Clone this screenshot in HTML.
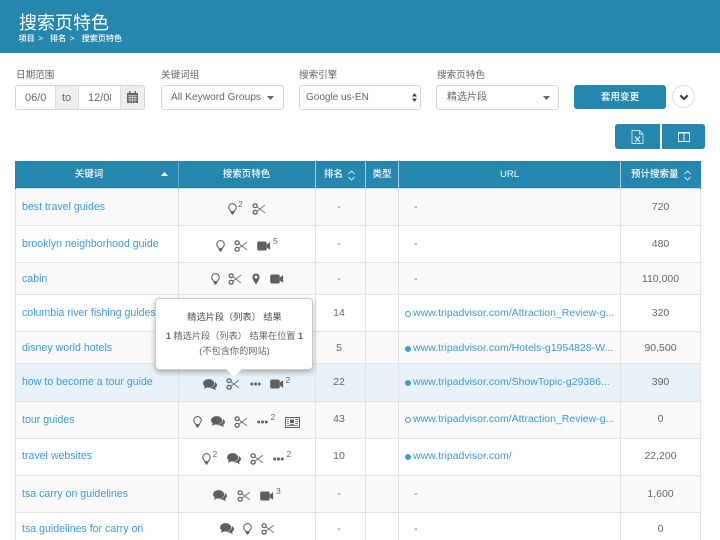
<!DOCTYPE html>
<html><head><meta charset="utf-8">
<style>
html,body{margin:0;padding:0;background:#fff}
#p{position:relative;width:720px;height:540px;overflow:hidden;font-family:"Liberation Sans","Noto Sans CJK SC",sans-serif;color:#666;background:#fff;filter:blur(.3px)}
#p div,#p a,#p svg{position:absolute;box-sizing:border-box}
.t{white-space:nowrap;line-height:14px;height:14px}
.c{transform:translateX(-50%)}
.l{font-size:9.6px;color:#666}
.b{background:#fff;border:1px solid #d5d5d5;border-radius:3px}
.v{font-size:10.5px;color:#666}
.h{font-size:9.5px;color:#fff;font-weight:500}
.k{font-size:10.6px;color:#3c9bd6;left:22px}
.u{font-size:10.5px;color:#3c9bd6;left:413px}
.n{font-size:10.5px;color:#666}
.s{font-size:8.5px;color:#666}
.i{fill:#5f5f5f;stroke:none;overflow:visible}
.r{left:15px;width:686px}
.vl{top:161px;width:1px;height:379px;background:#e2e2e2}
.hl{left:15px;width:686px;height:1px;background:#e3e3e3}
.dot{left:405px;width:6px;height:6px;border-radius:50%;border:1px solid #3c9bd6}
.f{background:#3c9bd6}
</style></head><body>
<svg width="0" height="0" style="position:absolute">
<defs>
<symbol id="bulb" viewBox="0 0 12 16"><path d="M6 .8a5 5 0 0 0-3.200 8.800c.6.6.9 1.200 1 2h4.400c.1-.8.4-1.400 1-2A5 5 0 0 0 6 .8z" fill="none" stroke="#5f5f5f" stroke-width="1.400"/><rect x="3.800" y="11.800" width="4.400" height="2.200" rx=".6" fill="#5f5f5f"/><rect x="4.700" y="14" width="2.600" height="1.500" rx=".7" fill="#5f5f5f"/></symbol>
<symbol id="sc" viewBox="0 0 15 14"><ellipse cx="3" cy="3.200" rx="2.400" ry="2.200" fill="none" stroke="#5f5f5f" stroke-width="1.500"/><ellipse cx="3" cy="10.800" rx="2.400" ry="2.200" fill="none" stroke="#5f5f5f" stroke-width="1.500"/><path d="M5 4.400 14.500 11.500M5 9.600 14.500 2.500" fill="none" stroke="#777" stroke-width="1.200"/></symbol>
<symbol id="vid" viewBox="0 0 15 11"><rect x="0" y=".5" width="10.500" height="10" rx="2" fill="#5f5f5f"/><path d="M10.500 4 14.200 1.200V9.800L10.500 7z" fill="#5f5f5f"/></symbol>
<symbol id="pin" viewBox="0 0 10 14"><path fill-rule="evenodd" d="M5 0a4.500 4.500 0 0 0-4.500 4.500C.5 7.500 5 14 5 14s4.500-6.500 4.500-9.500A4.500 4.500 0 0 0 5 0zm0 2.800a1.800 1.800 0 1 1 0 3.600 1.800 1.800 0 0 1 0-3.600z" fill="#5f5f5f"/></symbol>
<symbol id="chat" viewBox="0 0 15 13"><ellipse cx="6" cy="4.800" rx="6" ry="4.600" fill="#5f5f5f"/><path d="M2 7.500 1 10.500 5 9z" fill="#5f5f5f"/><path d="M12.800 3.300c1.500.9 2.200 2 2.200 3.300 0 1.300-.8 2.400-2 3.100l.9 2.600-3.300-1.900c-1.400 0-2.700-.3-3.600-1 3.300 0 6.300-2.500 5.800-6.100z" fill="#5f5f5f"/></symbol>
<symbol id="dots" viewBox="0 0 11 4"><circle cx="1.700" cy="2" r="1.500" fill="#5f5f5f"/><circle cx="5.500" cy="2" r="1.500" fill="#5f5f5f"/><circle cx="9.300" cy="2" r="1.500" fill="#5f5f5f"/></symbol>
<symbol id="news" viewBox="0 0 15 11"><rect x=".5" y=".5" width="14" height="10" fill="none" stroke="#5f5f5f"/><rect x="5" y="2.500" width="4" height="3.500" fill="#5f5f5f"/><path d="M2 2.500h2M2 4.500h2M2 6.500h2M2 8.500h11M10 2.500h3M10 4.500h3M10 6.500h3M5 7.300h4" stroke="#5f5f5f" stroke-width=".8"/></symbol>
</defs>
</svg>
<div id="p">
<!-- header -->
<div style="left:0;top:0;width:720px;height:53px;background:#2587ad"></div>
<div class="t" style="left:19px;top:13px;font-size:18px;line-height:20px;height:20px;color:#fff">搜索页特色</div>
<div class="t" style="left:18.500px;top:33px;font-size:8.100px;line-height:12px;height:12px;color:#fff;font-weight:500;word-spacing:1.300px">项目 &gt;&nbsp; 排名 &gt;&nbsp; 搜索页特色</div>

<!-- filters -->
<div class="t l" style="left:16px;top:69px">日期范围</div>
<div class="t l" style="left:161px;top:69px">关键词组</div>
<div class="t l" style="left:299px;top:69px">搜索引擎</div>
<div class="t l" style="left:437px;top:69px">搜索页特色</div>

<div class="b" style="left:15px;top:85px;width:130px;height:25px"></div>
<div style="left:55px;top:86px;width:24px;height:23px;background:#eee;border-left:1px solid #ddd;border-right:1px solid #ddd"></div>
<div style="left:120px;top:86px;width:24px;height:23px;background:#eee;border-left:1px solid #ddd;border-radius:0 2px 2px 0"></div>
<div class="t v" style="left:25px;top:91px;font-size:11px">06/0</div>
<div class="t v" style="left:62px;top:91px;font-size:11px">to</div>
<div class="t v" style="left:88px;top:91px;width:23px;overflow:hidden;font-size:11px">12/08</div>
<svg style="left:127px;top:91px" width="11" height="12" viewBox="0 0 11 12"><path d="M0 2h11v10H0z" fill="#666"/><path d="M1 4.500h9M1 6.700h9M1 8.900h9M3 4v7.500M5.500 4v7.500M8 4v7.500" stroke="#eee" stroke-width=".6"/><rect x="2" y="0" width="1.500" height="3" fill="#666"/><rect x="7.500" y="0" width="1.500" height="3" fill="#666"/></svg>

<div class="b" style="left:161px;top:85px;width:123px;height:25px"></div>
<div class="t v" style="left:171px;top:91px;font-size:10.200px">All Keyword Groups</div>
<svg style="left:267px;top:96px" width="7" height="4"><path d="M0 0h7L3.500 4z" fill="#666"/></svg>

<div class="b" style="left:299px;top:85px;width:122px;height:25px"></div>
<div class="t v" style="left:306px;top:91px;font-size:10px">Google us-EN</div>
<svg style="left:412px;top:93px" width="5" height="9"><path d="M0 3.500 2.500 0 5 3.500zM0 5.500 2.500 9 5 5.500z" fill="#444"/></svg>

<div class="b" style="left:436px;top:85px;width:123px;height:25px"></div>
<div class="t v" style="left:447px;top:91px;font-size:10px">精选片段</div>
<svg style="left:543px;top:96px" width="7" height="4"><path d="M0 0h7L3.500 4z" fill="#666"/></svg>

<div style="left:574px;top:85px;width:92px;height:24px;background:#2587ad;border-radius:3px"></div>
<div class="t c" style="left:620px;top:91px;font-size:9.600px;color:#fff;font-weight:500">套用变更</div>
<div style="left:672px;top:85px;width:23px;height:23px;border-radius:50%;border:1.500px solid #ddd;background:#fff"></div>
<svg style="left:679px;top:94px" width="10" height="7" viewBox="0 0 10 7"><path d="M1.300 1.300 5 5l3.700-3.700" fill="none" stroke="#444" stroke-width="2.200"/></svg>

<div style="left:615px;top:124px;width:45px;height:25px;background:#2587ad;border-radius:3px 0 0 3px"></div>
<div style="left:662px;top:124px;width:43px;height:25px;background:#2587ad;border-radius:0 3px 3px 0"></div>
<svg style="left:631px;top:130px" width="13" height="14" viewBox="0 0 13 14"><path d="M1 .5h7.500L12 4v9.500H1zM8.500.5V4H12" fill="none" stroke="#cfe4ee" stroke-width=".9"/><path d="M4 6.500 9 12M9 6.500 4 12" stroke="#e6f1f6" stroke-width="1.100"/></svg>
<svg style="left:677.500px;top:131.500px" width="12" height="10" viewBox="0 0 12 10"><path d="M.5.500h11v9H.5zM6 .5v9" fill="none" stroke="#e6f1f6" stroke-width="1"/><path d="M.5 1h11" stroke="#e6f1f6"/></svg>

<!-- table -->
<div style="left:15px;top:161px;width:686px;height:28px;background:#2587ad"></div>
<div class="r" style="top:189px;height:36px;background:#f9f9f9"></div>
<div class="r" style="top:226px;height:36px;background:#fff"></div>
<div class="r" style="top:263px;height:31px;background:#f9f9f9"></div>
<div class="r" style="top:295px;height:36px;background:#fff"></div>
<div class="r" style="top:332px;height:31px;background:#f9f9f9"></div>
<div class="r" style="top:364px;height:37px;background:#e9f1f8"></div>
<div class="r" style="top:402px;height:36px;background:#f9f9f9"></div>
<div class="r" style="top:439px;height:36px;background:#fff"></div>
<div class="r" style="top:476px;height:36px;background:#f9f9f9"></div>
<div class="r" style="top:513px;height:27px;background:#fff"></div>

<div class="hl" style="top:188px;background:#d9d9d9"></div>
<div class="hl" style="top:225px"></div><div class="hl" style="top:262px"></div><div class="hl" style="top:294px"></div><div class="hl" style="top:331px"></div><div class="hl" style="top:363px"></div><div class="hl" style="top:401px"></div><div class="hl" style="top:438px"></div><div class="hl" style="top:475px"></div><div class="hl" style="top:512px"></div>

<div class="vl" style="left:15px"></div><div class="vl" style="left:178px"></div><div class="vl" style="left:315px"></div><div class="vl" style="left:365px"></div><div class="vl" style="left:398px"></div><div class="vl" style="left:620px"></div><div class="vl" style="left:700px"></div>
<div style="left:178px;top:161px;width:1px;height:28px;background:#6aa9c5"></div>
<div style="left:315px;top:161px;width:1px;height:28px;background:#a8cfde"></div>
<div style="left:365px;top:161px;width:1px;height:28px;background:#a8cfde"></div>
<div style="left:398px;top:161px;width:1px;height:28px;background:#a8cfde"></div>
<div style="left:620px;top:161px;width:1px;height:28px;background:#a8cfde"></div>
<div style="left:15px;top:161px;width:1px;height:28px;background:#2587ad"></div>
<div style="left:700px;top:161px;width:1px;height:28px;background:#2587ad"></div>

<div class="t h c" style="left:89px;top:168px">关键词</div>
<svg style="left:161px;top:172px" width="7" height="4"><path d="M0 4h7L3.500 0z" fill="#fff"/></svg>
<div class="t h c" style="left:246.500px;top:168px">搜索页特色</div>
<div class="t h" style="left:324px;top:168px">排名</div>
<svg style="left:348px;top:170px" width="7" height="11" viewBox="0 0 7 11"><path d="M.5 4 3.500 1l3 3M.5 7l3 3 3-3" fill="none" stroke="#cfe4ee"/></svg>
<div class="t h c" style="left:382px;top:168px">类型</div>
<div class="t h c" style="left:509.500px;top:168px">URL</div>
<div class="t h" style="left:631px;top:168px">预计搜索量</div>
<svg style="left:684px;top:170px" width="7" height="11" viewBox="0 0 7 11"><path d="M.5 4 3.500 1l3 3M.5 7l3 3 3-3" fill="none" stroke="#cfe4ee"/></svg>

<!-- keyword column -->
<div class="t k" style="top:200px">best travel guides</div>
<div class="t k" style="top:237px">brooklyn neighborhood guide</div>
<div class="t k" style="top:272px">cabin</div>
<div class="t k" style="top:306px">columbia river fishing guides</div>
<div class="t k" style="top:341px">disney world hotels</div>
<div class="t k" style="top:375px">how to become a tour guide</div>
<div class="t k" style="top:413px">tour guides</div>
<div class="t k" style="top:449px">travel websites</div>
<div class="t k" style="top:487px">tsa carry on guidelines</div>
<div class="t k" style="top:522px">tsa guidelines for carry on</div>

<!-- icons -->
<svg class="i" style="left:227.500px;top:203px" width="9" height="12"><use href="#bulb"/></svg><div class="t s" style="left:238px;top:197px">2</div><svg class="i" style="left:252px;top:203px" width="14" height="12"><use href="#sc"/></svg>
<svg class="i" style="left:215.500px;top:240px" width="9" height="12"><use href="#bulb"/></svg><svg class="i" style="left:234px;top:240px" width="14" height="12"><use href="#sc"/></svg><svg class="i" style="left:257px;top:241px" width="14" height="10"><use href="#vid"/></svg><div class="t s" style="left:273px;top:234px">5</div>
<svg class="i" style="left:210.500px;top:273px" width="9" height="12"><use href="#bulb"/></svg><svg class="i" style="left:228px;top:273px" width="14" height="12"><use href="#sc"/></svg><svg class="i" style="left:252px;top:273px" width="8" height="12"><use href="#pin"/></svg><svg class="i" style="left:269.500px;top:274px" width="14" height="10"><use href="#vid"/></svg>
<svg class="i" style="left:203px;top:378.500px" width="14" height="12"><use href="#chat"/></svg><svg class="i" style="left:226px;top:378px" width="14" height="12"><use href="#sc"/></svg><svg class="i" style="left:249.500px;top:382px" width="11" height="4"><use href="#dots"/></svg><svg class="i" style="left:270px;top:379px" width="14" height="10"><use href="#vid"/></svg><div class="t s" style="left:285.500px;top:373px">2</div>
<svg class="i" style="left:193px;top:416px" width="9" height="12"><use href="#bulb"/></svg><svg class="i" style="left:211px;top:416px" width="14" height="12"><use href="#chat"/></svg><svg class="i" style="left:234px;top:416px" width="14" height="12"><use href="#sc"/></svg><svg class="i" style="left:257px;top:419.500px" width="11" height="4"><use href="#dots"/></svg><div class="t s" style="left:270.500px;top:410px">2</div><svg class="i" style="left:285px;top:416.500px" width="15" height="11"><use href="#news"/></svg>
<svg class="i" style="left:202px;top:453px" width="9" height="12"><use href="#bulb"/></svg><div class="t s" style="left:212.500px;top:447px">2</div><svg class="i" style="left:227px;top:453px" width="14" height="12"><use href="#chat"/></svg><svg class="i" style="left:250px;top:453px" width="14" height="12"><use href="#sc"/></svg><svg class="i" style="left:273px;top:456.500px" width="11" height="4"><use href="#dots"/></svg><div class="t s" style="left:286.500px;top:447px">2</div>
<svg class="i" style="left:213px;top:490px" width="14" height="12"><use href="#chat"/></svg><svg class="i" style="left:236.500px;top:490px" width="14" height="12"><use href="#sc"/></svg><svg class="i" style="left:260px;top:491px" width="14" height="10"><use href="#vid"/></svg><div class="t s" style="left:276px;top:484px">3</div>
<svg class="i" style="left:219.500px;top:523px" width="14" height="12"><use href="#chat"/></svg><svg class="i" style="left:242.500px;top:523px" width="9" height="12"><use href="#bulb"/></svg><svg class="i" style="left:260.500px;top:523px" width="14" height="12"><use href="#sc"/></svg>

<!-- rank -->
<div class="t n c" style="left:339px;top:200px">-</div>
<div class="t n c" style="left:339px;top:237px">-</div>
<div class="t n c" style="left:339px;top:272px">-</div>
<div class="t n c" style="left:339px;top:306px">14</div>
<div class="t n c" style="left:339px;top:341px">5</div>
<div class="t n c" style="left:339px;top:375px">22</div>
<div class="t n c" style="left:339px;top:412px">43</div>
<div class="t n c" style="left:339px;top:449px">10</div>
<div class="t n c" style="left:339px;top:487px">-</div>
<div class="t n c" style="left:339px;top:522px">-</div>

<!-- url -->
<div class="t n" style="left:414px;top:200px">-</div>
<div class="t n" style="left:414px;top:237px">-</div>
<div class="t n" style="left:414px;top:272px">-</div>
<div class="dot" style="top:311px"></div><div class="t u" style="top:306px">www.tripadvisor.com/Attraction_Review-g...</div>
<div class="dot f" style="top:346px"></div><div class="t u" style="top:341px">www.tripadvisor.com/Hotels-g1954828-W...</div>
<div class="dot f" style="top:380px"></div><div class="t u" style="top:375px">www.tripadvisor.com/ShowTopic-g29386...</div>
<div class="dot" style="top:417px"></div><div class="t u" style="top:412px">www.tripadvisor.com/Attraction_Review-g...</div>
<div class="dot f" style="top:454px"></div><div class="t u" style="top:449px">www.tripadvisor.com/</div>
<div class="t n" style="left:414px;top:487px">-</div>
<div class="t n" style="left:414px;top:522px">-</div>

<!-- volume -->
<div class="t n c" style="left:660.500px;top:200px">720</div>
<div class="t n c" style="left:660.500px;top:237px">480</div>
<div class="t n c" style="left:660.500px;top:272px">110,000</div>
<div class="t n c" style="left:660.500px;top:306px">320</div>
<div class="t n c" style="left:660.500px;top:341px">90,500</div>
<div class="t n c" style="left:660.500px;top:375px">390</div>
<div class="t n c" style="left:660.500px;top:412px">0</div>
<div class="t n c" style="left:660.500px;top:449px">22,200</div>
<div class="t n c" style="left:660.500px;top:487px">1,600</div>
<div class="t n c" style="left:660.500px;top:522px">0</div>

<!-- tooltip -->
<div style="left:155px;top:298px;width:158px;height:72px;background:#fff;border:1px solid #ccc;border-radius:4px;box-shadow:0 2px 6px rgba(0,0,0,.3)"></div>
<svg style="left:226px;top:369px" width="16" height="8"><path d="M0 0h16L8 8z" fill="#fff"/></svg>
<div class="t c" style="left:234.500px;top:310px;font-size:9.200px;font-weight:500;color:#666">精选片段（列表） 结果</div>
<div class="t c" style="left:234.500px;top:329px;font-size:9.200px;color:#666"><b>1</b> 精选片段（列表） 结果在位置 <b>1</b></div>
<div class="t c" style="left:234.500px;top:344px;font-size:9.200px;color:#666">(不包含你的网站)</div>
</div>
</body></html>
